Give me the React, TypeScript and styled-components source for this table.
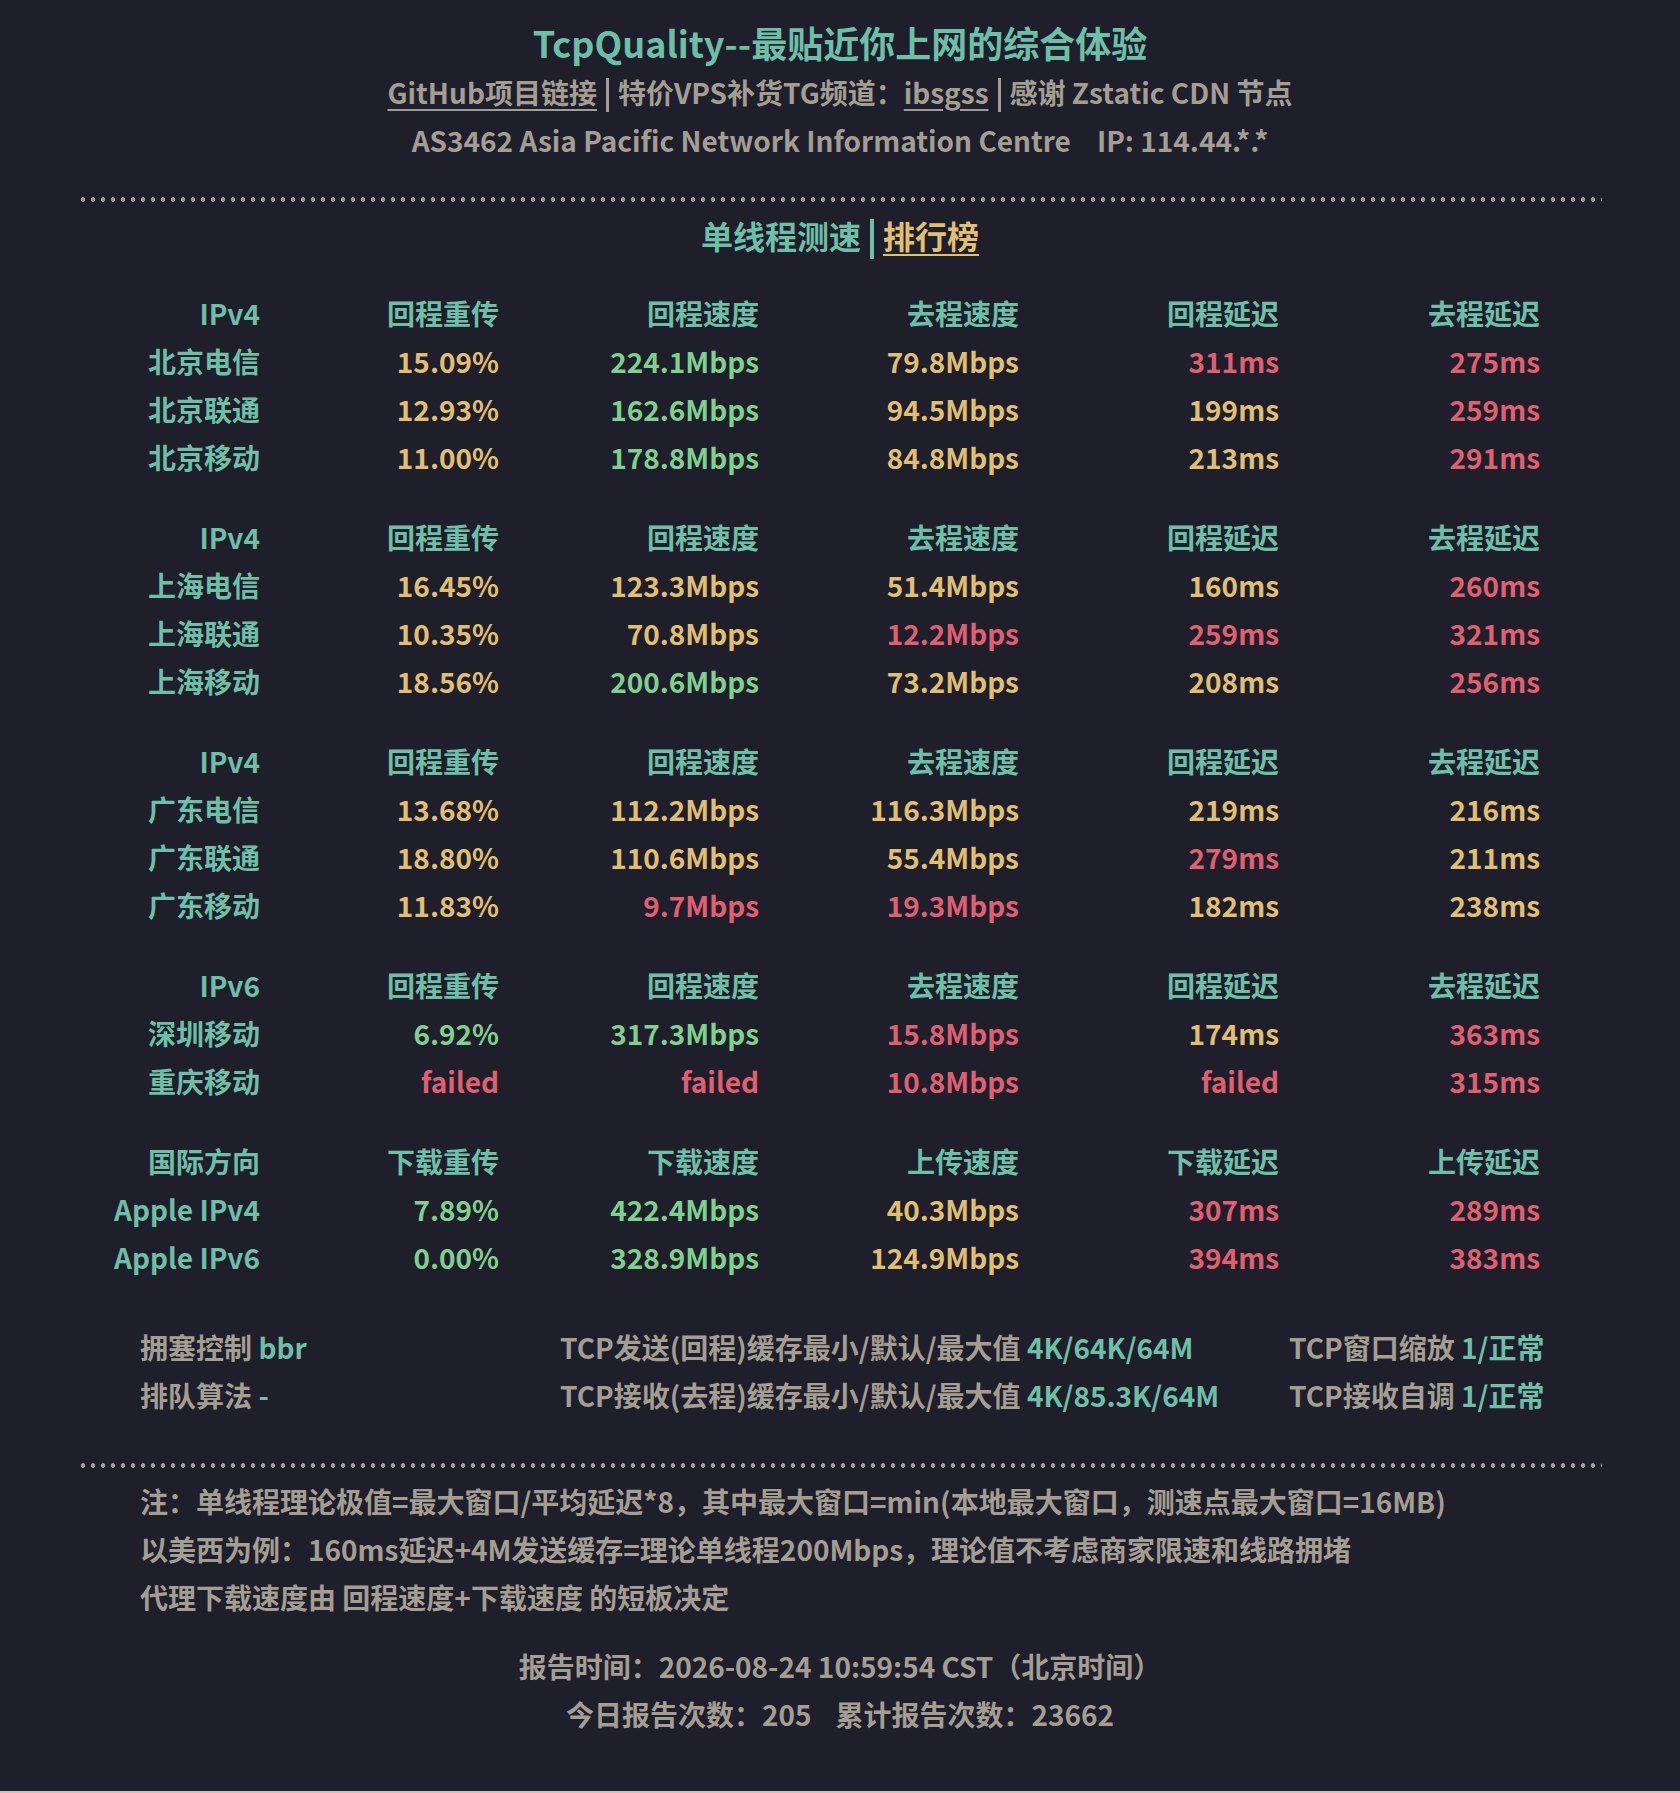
import React from "react";
import styled, { createGlobalStyle } from "styled-components";

const C = {
  bg: "#1f1e2b",
  teal: "#6dbfa7",
  yellow: "#e0bf73",
  green: "#7fd08d",
  red: "#e0606f",
  gray: "#a39e92",
};

const Global = createGlobalStyle`
  html { background: #c4c4c4; }
  body {
    margin: 0;
    background: #c4c4c4;
  }
`;

const Page = styled.div`
  box-sizing: border-box;
  min-height: 1791px;
  background: ${C.bg};
  padding-top: 16px;
  font-family: "Noto Sans CJK SC", "Noto Sans", "Liberation Sans", sans-serif;
  font-size: 28px;
  line-height: 48px;
  font-weight: 600;
  color: ${C.gray};
`;

const Title = styled.h1`
  margin: 0;
  text-align: center;
  font-size: 36px;
  line-height: 52px;
  font-weight: 600;
  color: ${C.teal};
`;

const InfoLine = styled.div`
  text-align: center;
  color: ${C.gray};
`;

const Link = styled.a<{ $color?: string }>`
  color: ${(p) => p.$color || C.gray};
  text-decoration: underline;
  text-decoration-thickness: 2px;
  text-underline-offset: 5px;
`;

const Bar = styled.span<{ $color: string; $h: number; $w: number }>`
  display: inline-block;
  width: ${(p) => p.$w}px;
  height: ${(p) => p.$h}px;
  background: ${(p) => p.$color};
  vertical-align: middle;
  margin: 0 9px;
  position: relative;
  top: -1px;
`;

const Gap = styled.span<{ $w: number }>`
  display: inline-block;
  width: ${(p) => p.$w}px;
`;

const Dotted = styled.div<{ $mt: number }>`
  width: 1524px;
  height: 5px;
  margin: ${(p) => p.$mt}px auto 0;
  background-image: radial-gradient(circle at center, ${C.gray} 2px, transparent 2.6px);
  background-size: 10px 5px;
  background-repeat: repeat-x;
  background-position: 0 0;
`;

const SectionTitle = styled.div`
  margin-top: 9px;
  text-align: center;
  font-size: 32px;
  line-height: 48px;
  color: ${C.teal};
`;

const Content = styled.div`
  width: 1400px;
  margin: 0 auto;
`;

const Tables = styled.div`
  margin-top: 29px;
  margin-left: -40px;
  width: 1440px;
  display: flex;
  flex-direction: column;
  gap: 32px;
`;

const Grid = styled.div`
  display: grid;
  grid-template-columns: 160px 239px 260px 260px 260px 261px;
  grid-auto-rows: 48px;
`;

const Cell = styled.div<{ $color: string }>`
  text-align: right;
  white-space: nowrap;
  color: ${(p) => p.$color};
`;

const Config = styled.div`
  margin-top: 42px;
  display: grid;
  grid-template-columns: 420px 729px auto;
  grid-auto-rows: 48px;
`;

const ConfItem = styled.div`
  white-space: nowrap;
  color: ${C.gray};
`;

const Val = styled.span`
  color: ${C.teal};
`;

const Notes = styled.div`
  margin-top: 9px;
  color: ${C.gray};
`;

const Report = styled.div`
  margin-top: 21px;
  text-align: center;
  color: ${C.gray};
`;

type Tone = "y" | "g" | "r";
const toneColor: Record<Tone, string> = { y: C.yellow, g: C.green, r: C.red };

type Row = { name: string; cells: [string, Tone][] };
type Group = { head: string[]; rows: Row[] };

const ipv4Head = ["IPv4", "回程重传", "回程速度", "去程速度", "回程延迟", "去程延迟"];

const groups: Group[] = [
  {
    head: ipv4Head,
    rows: [
      { name: "北京电信", cells: [["15.09%", "y"], ["224.1Mbps", "g"], ["79.8Mbps", "y"], ["311ms", "r"], ["275ms", "r"]] },
      { name: "北京联通", cells: [["12.93%", "y"], ["162.6Mbps", "g"], ["94.5Mbps", "y"], ["199ms", "y"], ["259ms", "r"]] },
      { name: "北京移动", cells: [["11.00%", "y"], ["178.8Mbps", "g"], ["84.8Mbps", "y"], ["213ms", "y"], ["291ms", "r"]] },
    ],
  },
  {
    head: ipv4Head,
    rows: [
      { name: "上海电信", cells: [["16.45%", "y"], ["123.3Mbps", "y"], ["51.4Mbps", "y"], ["160ms", "y"], ["260ms", "r"]] },
      { name: "上海联通", cells: [["10.35%", "y"], ["70.8Mbps", "y"], ["12.2Mbps", "r"], ["259ms", "r"], ["321ms", "r"]] },
      { name: "上海移动", cells: [["18.56%", "y"], ["200.6Mbps", "g"], ["73.2Mbps", "y"], ["208ms", "y"], ["256ms", "r"]] },
    ],
  },
  {
    head: ipv4Head,
    rows: [
      { name: "广东电信", cells: [["13.68%", "y"], ["112.2Mbps", "y"], ["116.3Mbps", "y"], ["219ms", "y"], ["216ms", "y"]] },
      { name: "广东联通", cells: [["18.80%", "y"], ["110.6Mbps", "y"], ["55.4Mbps", "y"], ["279ms", "r"], ["211ms", "y"]] },
      { name: "广东移动", cells: [["11.83%", "y"], ["9.7Mbps", "r"], ["19.3Mbps", "r"], ["182ms", "y"], ["238ms", "y"]] },
    ],
  },
  {
    head: ["IPv6", "回程重传", "回程速度", "去程速度", "回程延迟", "去程延迟"],
    rows: [
      { name: "深圳移动", cells: [["6.92%", "g"], ["317.3Mbps", "g"], ["15.8Mbps", "r"], ["174ms", "y"], ["363ms", "r"]] },
      { name: "重庆移动", cells: [["failed", "r"], ["failed", "r"], ["10.8Mbps", "r"], ["failed", "r"], ["315ms", "r"]] },
    ],
  },
  {
    head: ["国际方向", "下载重传", "下载速度", "上传速度", "下载延迟", "上传延迟"],
    rows: [
      { name: "Apple IPv4", cells: [["7.89%", "g"], ["422.4Mbps", "g"], ["40.3Mbps", "y"], ["307ms", "r"], ["289ms", "r"]] },
      { name: "Apple IPv6", cells: [["0.00%", "g"], ["328.9Mbps", "g"], ["124.9Mbps", "y"], ["394ms", "r"], ["383ms", "r"]] },
    ],
  },
];

const config: [string, string][] = [
  ["拥塞控制", "bbr"],
  ["TCP发送(回程)缓存最小/默认/最大值", "4K/64K/64M"],
  ["TCP窗口缩放", "1/正常"],
  ["排队算法", "-"],
  ["TCP接收(去程)缓存最小/默认/最大值", "4K/85.3K/64M"],
  ["TCP接收自调", "1/正常"],
];

export default function App() {
  return (
    <Page>
      <Global />
      <Title>TcpQuality--最贴近你上网的综合体验</Title>
      <InfoLine>
        <Link>GitHub项目链接</Link>
        <Bar $color={C.gray} $w={3} $h={34} />
        特价VPS补货TG频道：<Link>ibsgss</Link>
        <Bar $color={C.gray} $w={3} $h={34} />
        感谢 Zstatic CDN 节点
      </InfoLine>
      <InfoLine>
        AS3462 Asia Pacific Network Information Centre
        <Gap $w={26} />
        IP: 114.44.*.*
      </InfoLine>
      <Dotted $mt={33} />
      <SectionTitle>
        单线程测速
        <Bar $color={C.teal} $w={4} $h={40} />
        <Link $color={C.yellow}>排行榜</Link>
      </SectionTitle>
      <Content>
        <Tables>
          {groups.map((g, gi) => (
            <Grid key={gi}>
              {g.head.map((h, i) => (
                <Cell key={"h" + i} $color={C.teal}>
                  {h}
                </Cell>
              ))}
              {g.rows.map((r) => (
                <React.Fragment key={r.name}>
                  <Cell $color={C.teal}>{r.name}</Cell>
                  {r.cells.map(([v, t], i) => (
                    <Cell key={i} $color={toneColor[t]}>
                      {v}
                    </Cell>
                  ))}
                </React.Fragment>
              ))}
            </Grid>
          ))}
        </Tables>
        <Config>
          {config.map(([k, v]) => (
            <ConfItem key={k}>
              {k} <Val>{v}</Val>
            </ConfItem>
          ))}
        </Config>
      </Content>
      <Dotted $mt={44} />
      <Content>
        <Notes>
          <div>注：单线程理论极值=最大窗口/平均延迟*8，其中最大窗口=min(本地最大窗口，测速点最大窗口=16MB)</div>
          <div>以美西为例：160ms延迟+4M发送缓存=理论单线程200Mbps，理论值不考虑商家限速和线路拥堵</div>
          <div>代理下载速度由 回程速度+下载速度 的短板决定</div>
        </Notes>
      </Content>
      <Report>
        <div>报告时间：2026-08-24 10:59:54 CST（北京时间）</div>
        <div>
          今日报告次数：205
          <Gap $w={24} />
          累计报告次数：23662
        </div>
      </Report>
    </Page>
  );
}
